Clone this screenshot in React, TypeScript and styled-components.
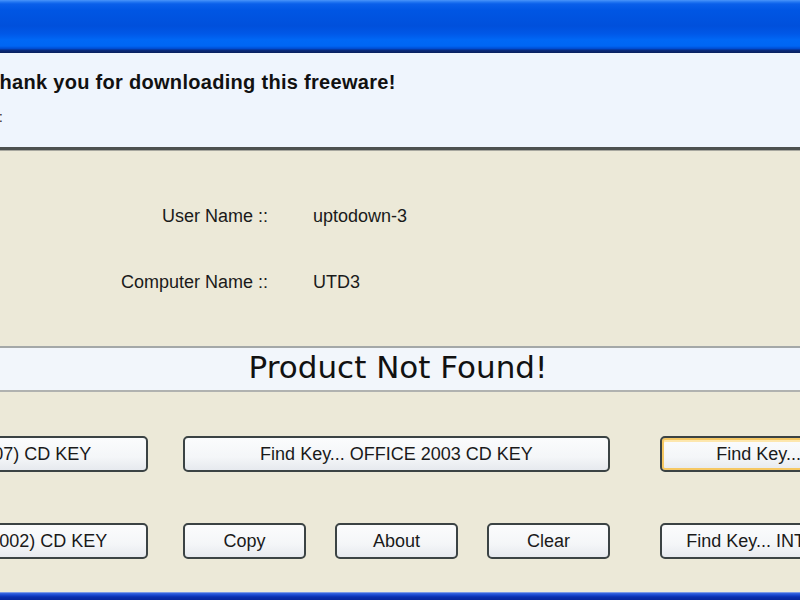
import React from 'react'
import styled, { createGlobalStyle } from 'styled-components'

const GlobalStyle = createGlobalStyle`
  html, body {
    margin: 0;
    padding: 0;
    background: #ece9d8;
    overflow: hidden;
  }
  body {
    font-family: 'Liberation Sans', Arial, sans-serif;
  }
`

// the photographed area is a crop of a wider dialog: the window starts left of the viewport
const Viewport = styled.div`
  width: 800px;
  height: 600px;
  overflow: hidden;
`

const Window = styled.div`
  margin-left: -300px;
  width: 1396px;
  height: 600px;
  display: flex;
  flex-direction: column;
  background: #ece9d8;
`

const TitleBar = styled.div`
  flex: 0 0 53px;
  background: linear-gradient(
    to bottom,
    #4a95fa 0px,
    #2377f2 2px,
    #0a5fea 4px,
    #0056e4 10px,
    #0050dc 26px,
    #0058e8 34px,
    #0068f6 40px,
    #0066f4 46px,
    #0048cc 49px,
    #0a2c80 50px,
    #091f5c 53px
  );
`

const Header = styled.div`
  flex: 0 0 97px;
  background: #eff5fd;
  border-bottom: 3px solid #4d5150;
  box-shadow: 0 1px 0 #a8a8a0;
  display: flex;
  flex-direction: column;
  padding-left: 287px;
  padding-top: 17px;
  box-sizing: border-box;
`

const Thanks = styled.div`
  font-weight: bold;
  font-size: 20px;
  letter-spacing: 0.3px;
  line-height: 24px;
  color: #111;
`

const SubLine = styled.div`
  width: 16px;
  margin-top: 14px;
  text-align: right;
  font-size: 15px;
  line-height: 18px;
  color: #333;
`

const Body = styled.div`
  flex: 1;
  display: flex;
  flex-direction: column;
  padding-top: 54px;
`

const InfoGrid = styled.div`
  display: grid;
  grid-template-columns: 568px 1fr;
  column-gap: 45px;
  row-gap: 42px;
  font-size: 18px;
  line-height: 24px;
  color: #1a1a1a;
`

const InfoLabel = styled.div`
  text-align: right;
`

const InfoValue = styled.div``

const StatusPanel = styled.div`
  margin-top: 52px;
  height: 46px;
  box-sizing: border-box;
  padding-bottom: 5px;
  background: #f2f6fb;
  border-top: 2px solid #a4a8a8;
  border-bottom: 2px solid #b0b2b0;
  display: flex;
  align-items: center;
  justify-content: center;
  font-family: 'DejaVu Sans', Verdana, sans-serif;
  font-size: 31px;
  color: #111;
`

const ButtonArea = styled.div`
  margin-top: 44px;
  padding-left: 21px;
  display: flex;
  flex-direction: column;
  gap: 51px;
`

const ButtonRow = styled.div`
  display: flex;
  align-items: center;
`

const Cluster = styled.div`
  width: 427px;
  margin-left: 35px;
  display: flex;
  justify-content: space-between;
`

const XpButton = styled.button<{ $w: number; $ml?: number; $focus?: boolean }>`
  width: ${p => p.$w}px;
  margin-left: ${p => p.$ml ?? 0}px;
  height: 36px;
  flex: 0 0 auto;
  border: 2px solid #3b4344;
  border-radius: 5px;
  background: linear-gradient(to bottom, #fbfcfd 0%, #f4f6f8 60%, #e6e9ee 100%);
  box-shadow: ${p => (p.$focus ? 'inset 0 0 0 2px #f6c863, inset 0 2px 0 2px #fde7ae' : 'none')};
  font-family: 'Liberation Sans', Arial, sans-serif;
  font-size: 18px;
  color: #1a1a1a;
  white-space: nowrap;
  overflow: hidden;
  padding: 0;
  text-align: center;
`

const BottomFrame = styled.div`
  flex: 0 0 8px;
  background: linear-gradient(
    to bottom,
    #b8c8ee 0px,
    #3d6ae0 1px,
    #1a48d0 3px,
    #0a2fae 5px,
    #08279c 8px
  );
`

export default function App() {
  return (
    <>
      <GlobalStyle />
      <Viewport>
        <Window>
          <TitleBar />
          <Header>
            <Thanks>Thank you for downloading this freeware!</Thanks>
            <SubLine>:</SubLine>
          </Header>
          <Body>
            <InfoGrid>
              <InfoLabel>User Name ::</InfoLabel>
              <InfoValue>uptodown-3</InfoValue>
              <InfoLabel>Computer Name ::</InfoLabel>
              <InfoValue>UTD3</InfoValue>
            </InfoGrid>
            <StatusPanel>Product Not Found!</StatusPanel>
            <ButtonArea>
              <ButtonRow>
                <XpButton $w={427}>Find Key... OFFICE XP (2007) CD KEY</XpButton>
                <XpButton $w={427} $ml={35}>Find Key... OFFICE 2003 CD KEY</XpButton>
                <XpButton $w={420} $ml={50} $focus>Find Key... WINDOWS VISTA CD KEY</XpButton>
              </ButtonRow>
              <ButtonRow>
                <XpButton $w={427}>Find Key... MS OFFICE XP (2002) CD KEY</XpButton>
                <Cluster>
                  <XpButton $w={123}>Copy</XpButton>
                  <XpButton $w={123}>About</XpButton>
                  <XpButton $w={123}>Clear</XpButton>
                </Cluster>
                <XpButton $w={407} $ml={50}>Find Key... INTERNET EXPLORER CD KEY</XpButton>
              </ButtonRow>
            </ButtonArea>
          </Body>
          <BottomFrame />
        </Window>
      </Viewport>
    </>
  )
}
